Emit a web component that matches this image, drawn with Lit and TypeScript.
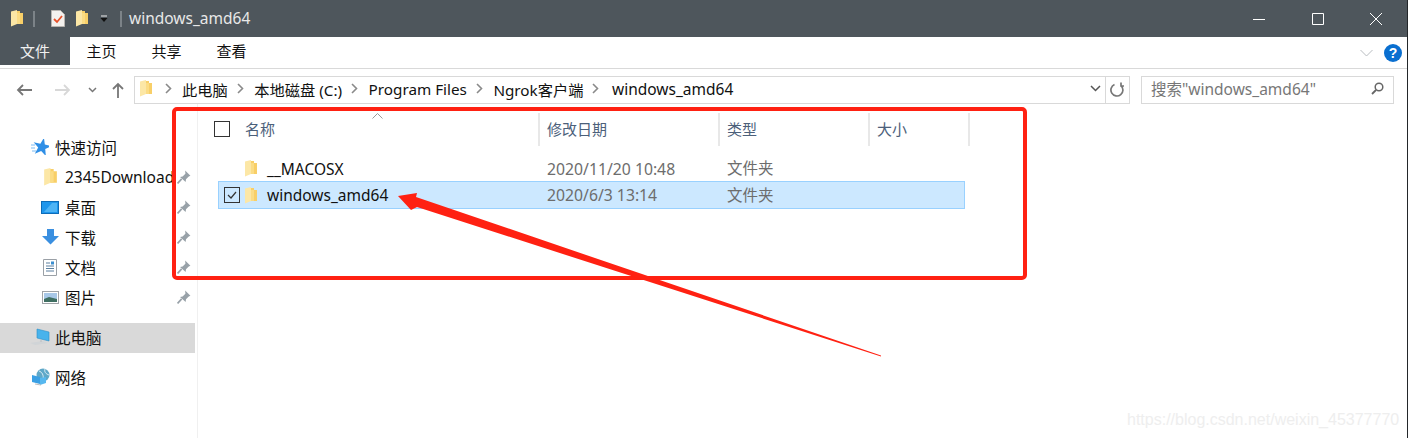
import { LitElement, html, css, svg } from "lit"
import { customElement } from "lit/decorators.js"

const folder = (w = 12, h = 17) => html`<svg class="ico" width=${w} height=${h} viewBox="0 0 12 17">
  <path d="M5 1H9V3H12V14H5Z" fill="#f8cf68"/>
  <path d="M0 1.500L6 0V14L0 16.500Z" fill="#fce7a6"/>
  <path d="M6 3H9V14H6Z" fill="#fbdc85"/>
</svg>`

const chevron = html`<svg class="ico chev" width="7" height="11" viewBox="0 0 7 11"><path d="M1 1l4.500 4.500L1 10" fill="none" stroke="#8a8a8a" stroke-width="1.600"/></svg>`

const pin = html`<svg class="pin" width="14" height="14" viewBox="0 0 12 12">
  <path d="M7 0.500l4.500 4.500-1.400.6-2.400 2.400-.3 2.200L2.600 5.900l2.200-.3 2.400-2.400z" fill="#98a1a8"/>
  <path d="M4 7.600L0.500 11.500" stroke="#98a1a8" stroke-width="1.400"/>
</svg>`

const starIcon = svg`<path transform="rotate(12 11 8) translate(-2.200 -2) scale(1.200)" d="M11 .5L12.900 5.900L18.600 6L14 9.500L15.700 15L11 11.700L6.300 15L8 9.500L3.400 6L9.100 5.900Z" fill="#2f8fe6"/><path d="M0 6h4M0 9h4M1 12h4" stroke="#7cbcf2"/>`
const desktopIcon = svg`<rect x=".5" y=".5" width="17" height="12" fill="#1e96ec" stroke="#0d6cb8"/><path d="M3 11L11 2h5v9z" fill="#4fb4f5"/>`
const downIcon = svg`<path d="M5 0h7v7h5l-8.500 8.500L0 7h5z" fill="#3a8fe0"/>`
const docIcon = svg`<path d="M.5.500h13v16h-13z" fill="#fff" stroke="#9aa0a6"/><path d="M3 4h4M3 7h8M3 9.500h8M3 12h8" stroke="#5a7f9f"/><path d="M8 2.500h3v3H8z" fill="#3a8fd0"/>`
const picIcon = svg`<rect x=".5" y=".5" width="16" height="12" fill="#fff" stroke="#a0a4a8"/><rect x="2" y="2" width="13" height="9" fill="#a8c8e8"/><path d="M2 8l5-2 8 2v3H2z" fill="#3f6f62"/>`
const pcIcon = svg`<path d="M7 1l12 3v9L7 10z" fill="#48b3ec" stroke="#2a8ec8" stroke-width=".6"/><path d="M0 15l13-2 5 2-13 2z" fill="#d0d4d7"/><path d="M11 12v2" stroke="#b8bcc0"/>`
const netIcon = svg`<circle cx="12" cy="7" r="6.500" fill="#5fa8c8"/><path d="M8 3c3 1 5 4 4 9M14 1c-1 3 1 5 4 6" stroke="#d8ecf4" fill="none"/><path d="M1 7l8 2v7l-8-2z" fill="#3aa0e4"/><path d="M9 10l6-1v6l-6 2z" fill="#57b8ef"/><path d="M4 16l6 1" stroke="#b8bcc0"/>`

const crumbs = ["此电脑", "本地磁盘 (C:)", "Program Files", "Ngrok客户端"]

@customElement("app-root")
class AppRoot extends LitElement {
  static styles = css`
    :host {
      display: block;
      position: relative;
      box-sizing: border-box;
      width: 1408px;
      height: 438px;
      overflow: hidden;
      background: #fff;
      border-right: 1px solid #23272a;
      font-family: "Noto Sans", "Noto Sans CJK SC", sans-serif;
      font-size: 15px;
      color: #111;
    }
    .ico, .pin { display: block; flex: none; }

    .titlebar {
      display: flex;
      align-items: center;
      height: 37px;
      padding-left: 11px;
      background: #4e565c;
      color: #e8e8e8;
    }
    .sep { width: 2px; height: 16px; border: 1px solid #7c8388; background: #5f666b; box-sizing: border-box; }
    .title { margin-left: 7px; padding-bottom: 2px; font-size: 15.500px; }
    .winbtns { display: flex; margin-left: auto; gap: 46px; padding-right: 25px; }

    .ribbon { display: flex; align-items: center; height: 31px; border-bottom: 1px solid #d9d9d9; box-sizing: content-box; }
    .tab { width: 65px; height: 28px; margin-bottom: 3px; line-height: 28px; text-align: center; }
    .tab.file { width: 70px; margin-right: -1px; background: #4e565c; color: #f0f0f0; }
    .ribbon-end { display: flex; align-items: center; gap: 11px; margin-left: auto; padding-right: 5px; }
    .help { width: 18px; height: 18px; border-radius: 50%; background: #0a6fd0; color: #fff; font: bold 14px/18px "Liberation Sans", sans-serif; text-align: center; }

    .navrow { display: flex; align-items: center; height: 27px; margin-top: 7px; padding-left: 16px; }
    .navbtns { display: flex; align-items: center; width: 118px; }
    .addr {
      display: flex;
      align-items: center;
      box-sizing: border-box;
      width: 972px;
      height: 28px;
      padding: 0 0 2px 5px;
      border: 1px solid #d9d9d9;
      font-size: 15.250px;
    }
    .addr .chev { margin: 0 10.500px 0 9px; }
    .addr .root { margin-left: 3.500px; }
    .addr .last { margin-left: 2px; font-size: 15.500px; }
    .addr .end { margin-left: auto; margin-right: 4px; }
    .refresh { display: flex; align-items: center; justify-content: center; box-sizing: border-box; width: 24px; height: 28px; border: 1px solid #d9d9d9; border-left: 0; }
    .search {
      display: flex;
      align-items: center;
      justify-content: space-between;
      box-sizing: border-box;
      width: 253px;
      height: 28px;
      margin-left: 11px;
      padding: 0 9px 2px;
      border: 1px solid #d9d9d9;
      font-size: 15.500px;
      color: #777;
    }

    .body { display: flex; height: 335px; margin-top: 1px; }
    .side { width: 197px; border-right: 1px solid #f0f0f0; padding-top: 29px; box-sizing: content-box; font-size: 15.500px; }
    .side-row { display: flex; align-items: center; box-sizing: border-box; height: 30px; width: 195px; padding-bottom: 2px; }
    .side-row .ic { display: flex; justify-content: center; flex: none; width: 18px; }
    .side-row .label { width: 108px; margin-left: 6px; white-space: nowrap; overflow: hidden; }
    .side-row .pin { margin-left: auto; margin-right: 4px; }
    .lvl1 { padding-left: 41px; }
    .lvl0 { padding-left: 31px; }
    .side-row.sel { background: #d9d9d9; margin-top: 10px; margin-bottom: 10px; }

    .main { flex: 1; position: relative; }
    .head { display: grid; grid-template-columns: 342px 180px 150px 100px; height: 33px; margin-top: 9px; color: #4c607a; }
    .head > div { display: flex; align-items: center; box-sizing: border-box; padding-left: 7px; padding-bottom: 2px; border-right: 2px solid #e8e8e8; }
    .head > div:first-child { padding-left: 16px; }
    .head .check { margin-right: 15px; }
    .check { width: 16px; height: 16px; box-sizing: border-box; border: 1px solid #333; flex: none; }
    .rows { margin: 9px 0 0 20px; width: 747px; }
    .row { display: grid; grid-template-columns: 328px 180px 1fr; align-items: center; height: 26px; box-sizing: border-box; border: 1px solid transparent; color: #6d6d6d; font-size: 15.500px; }
    .row.sel { height: 28px; background: #cce8ff; border-color: #99d1ff; }
    .row .name { display: flex; align-items: center; color: #111; padding-left: 26px; }
    .row .name .ico { margin-right: 10px; }
    .row .date { font-size: 15.750px; }
    .row .type { padding-bottom: 2px; }
    .row.sel .name { padding-left: 5px; }
    .row.sel .name .check { margin-right: 5px; display: flex; }

    .sort { position: absolute; left: 174px; top: 9px; }
    .annot { position: absolute; inset: 0; pointer-events: none; }
    .redbox { position: absolute; left: 172px; top: 107px; width: 855px; height: 173px; box-sizing: border-box; border: 4px solid #ff2112; border-radius: 5px; }
    .arrow { position: absolute; left: 0; top: 0; }
    .mark { position: absolute; left: 1127px; top: 411px; font: 16px "Liberation Sans", sans-serif; color: #eeeeee; white-space: nowrap; }
  `

  sideItem(icon: unknown, w: number, h: number, label: string, pinned = true, cls = "lvl1") {
    return html`<div class="side-row ${cls}">
      <div class="ic"><svg class="ico" width=${w} height=${h} viewBox="0 0 ${w} ${h}">${icon}</svg></div>
      <div class="label">${label}</div>
      ${pinned ? pin : ""}
    </div>`
  }

  render() {
    return html`
      <div class="titlebar">
        ${folder()}
        <div class="sep" style="margin-left:10px"></div>
        <svg class="ico" style="margin-left:16px" width="14" height="17" viewBox="0 0 14 17">
          <path d="M.5.500h9l4 4v12H.5z" fill="#f4f1ee" stroke="#b8b4b0"/>
          <path d="M3 9l3 3 5-6" fill="none" stroke="#e8512a" stroke-width="1.800"/>
        </svg>
        <div style="margin-left:11px">${folder()}</div>
        <svg class="ico" style="margin-left:12px" width="8" height="8" viewBox="0 0 8 8">
          <path d="M1 1h6" stroke="#eee"/><path d="M.5 3h7L4 7z" fill="#111"/>
        </svg>
        <div class="sep" style="margin-left:12px"></div>
        <div class="title">windows_amd64</div>
        <div class="winbtns">
          <svg class="ico" style="margin-right:1px" width="12" height="12" viewBox="0 0 12 12"><path d="M0 6.500h12" stroke="#fff"/></svg>
          <svg class="ico" width="12" height="12" viewBox="0 0 12 12"><path d="M.5.500h11v11H.5z" fill="none" stroke="#fff"/></svg>
          <svg class="ico" width="12" height="12" viewBox="0 0 12 12"><path d="M0 0l12 12M12 0L0 12" stroke="#fff"/></svg>
        </div>
      </div>

      <div class="ribbon">
        <div class="tab file">文件</div>
        <div class="tab">主页</div>
        <div class="tab">共享</div>
        <div class="tab">查看</div>
        <div class="ribbon-end">
          <svg class="ico" width="13" height="8" viewBox="0 0 13 8"><path d="M.5 1l6 6 6-6" fill="none" stroke="#b8bcc0"/></svg>
          <div class="help">?</div>
        </div>
      </div>

      <div class="navrow">
        <div class="navbtns">
          <svg class="ico" width="16" height="12" viewBox="0 0 16 12"><path d="M16 6H2M7 1L2 6l5 5" fill="none" stroke="#777" stroke-width="1.800"/></svg>
          <svg class="ico" style="margin-left:23px" width="16" height="12" viewBox="0 0 16 12"><path d="M0 6h14M9 1l5 5-5 5" fill="none" stroke="#d8d8d8" stroke-width="1.800"/></svg>
          <svg class="ico" style="margin-left:17px" width="9" height="6" viewBox="0 0 9 6"><path d="M1 1l3.500 3.500L8 1" fill="none" stroke="#777" stroke-width="1.500"/></svg>
          <svg class="ico" style="margin-left:15px" width="12" height="16" viewBox="0 0 12 16"><path d="M6 16V2M1 7l5-5 5 5" fill="none" stroke="#777" stroke-width="1.800"/></svg>
        </div>
        <div class="addr">
          ${folder()}
          <span class="root"></span>
          ${chevron}
          ${crumbs.map(c => html`<span>${c}</span>${chevron}`)}
          <span class="last">windows_amd64</span>
          <svg class="ico end" width="11" height="7" viewBox="0 0 11 7"><path d="M1 1l4.500 4.500L10 1" fill="none" stroke="#555" stroke-width="1.500"/></svg>
        </div>
        <div class="refresh">
          <svg class="ico" width="15" height="15" viewBox="0 0 15 15"><path d="M4.500 2.500A6 6 0 1 0 11 3.600M11 .5v3.500h3" fill="none" stroke="#777" stroke-width="1.700"/></svg>
        </div>
        <div class="search">
          <span>搜索"windows_amd64"</span>
          <svg class="ico" width="13" height="13" viewBox="0 0 13 13"><circle cx="8" cy="5" r="3.800" fill="none" stroke="#666" stroke-width="1.500"/><path d="M5 8l-4 4" stroke="#666" stroke-width="1.800"/></svg>
        </div>
      </div>

      <div class="body">
        <div class="side">
          ${this.sideItem(starIcon, 18, 16, "快速访问", false, "lvl0")}
          <div class="side-row lvl1">
            <div class="ic">${folder(13, 18)}</div>
            <div class="label">2345Downloads</div>
            ${pin}
          </div>
          ${this.sideItem(desktopIcon, 18, 13, "桌面")}
          ${this.sideItem(downIcon, 17, 16, "下载")}
          ${this.sideItem(docIcon, 14, 17, "文档")}
          ${this.sideItem(picIcon, 17, 13, "图片")}
          <div class="side-row sel lvl0">
            <div class="ic"><svg class="ico" width="20" height="18" viewBox="0 0 20 18">${pcIcon}</svg></div>
            <div class="label">此电脑</div>
          </div>
          ${this.sideItem(netIcon, 19, 18, "网络", false, "lvl0")}
        </div>

        <div class="main">
          <svg class="ico sort" width="11" height="6" viewBox="0 0 11 6"><path d="M.5 5.500l5-5 5 5" fill="none" stroke="#999"/></svg>
          <div class="head">
            <div><span class="check"></span>名称</div>
            <div>修改日期</div>
            <div>类型</div>
            <div>大小</div>
          </div>
          <div class="rows">
            <div class="row">
              <div class="name">${folder()}__MACOSX</div>
              <div class="date">2020/11/20 10:48</div>
              <div class="type">文件夹</div>
            </div>
            <div class="row sel">
              <div class="name">
                <span class="check"><svg width="14" height="14" viewBox="0 0 14 14"><path d="M3 7l3 3 5-6" fill="none" stroke="#333" stroke-width="1.200"/></svg></span>
                ${folder()}windows_amd64
              </div>
              <div class="date">2020/6/3 13:14</div>
              <div class="type">文件夹</div>
            </div>
          </div>
        </div>
      </div>

      <div class="annot">
        <div class="redbox"></div>
        <svg class="arrow" width="1408" height="438" viewBox="0 0 1408 438">
          <path d="M398 196L417 193L416 197L881 355.500L881 356.500L417 207L411 210Z" fill="#ff2112"/>
        </svg>
        <div class="mark">https://blog.csdn.net/weixin_45377770</div>
      </div>
    `
  }
}
